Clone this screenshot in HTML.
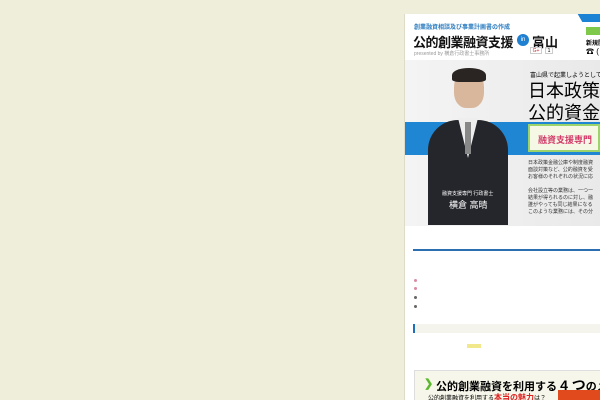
<!DOCTYPE html>
<html><head><meta charset="utf-8"><style>
*{margin:0;padding:0;box-sizing:border-box}
html,body{width:600px;height:400px;overflow:hidden}
body{background:#efeedb;position:relative;font-family:"Liberation Sans","Noto Sans CJK JP",sans-serif}
.abs{position:absolute}
#wrap{position:absolute;left:0;top:0;width:600px;height:400px;overflow:hidden}
</style></head><body><div id="wrap">
<div class="abs" style="left:404px;top:14px;width:196px;height:386px;background:#fff;border-left:1px solid #dedcc6"></div>
<div class="abs" style="left:414px;top:22px;font-size:6px;color:#2a7bbf;font-weight:bold">創業融資相談及び事業計画書の作成</div>
<div class="abs" style="left:413px;top:32px;font-size:13px;color:#111;font-weight:bold;letter-spacing:-0.5px;white-space:nowrap">公的創業融資支援</div>
<div class="abs" style="left:517px;top:34px;width:12px;height:12px;border-radius:50%;background:#1f7fd0;color:#fff;font-size:6px;text-align:center;line-height:12px">in</div>
<div class="abs" style="left:532px;top:32px;font-size:13px;color:#111;font-weight:bold">富山</div>
<div class="abs" style="left:414px;top:50px;font-size:5px;color:#999;white-space:nowrap">presented by 横倉行政書士事務所</div>
<div class="abs" style="left:530px;top:47px;width:12px;height:7px;border:1px solid #ccc;font-size:5px;color:#c33;text-align:center">G+</div>
<div class="abs" style="left:545px;top:47px;width:8px;height:7px;border:1px solid #ccc;font-size:5px;text-align:center">1</div>
<div class="abs" style="left:580px;top:14px;width:30px;height:8px;background:#1c82d4;transform:skewX(30deg)"></div>
<div class="abs" style="left:586px;top:27px;width:20px;height:8px;background:#7ec84a"></div>
<div class="abs" style="left:586px;top:38px;font-size:6px;font-weight:bold;white-space:nowrap">新規開</div>
<div class="abs" style="left:586px;top:46px;font-size:8px;white-space:nowrap">☎ (</div>
<div class="abs" style="left:405px;top:60px;width:195px;height:166px;background:linear-gradient(90deg,#f4f4f4,#e9e9e9)"></div>
<div class="abs" style="left:405px;top:122px;width:195px;height:33px;background:#1e86d2"></div>
<div class="abs" style="left:528px;top:124px;width:72px;height:28px;background:#f4f8e4;border:2px solid #9cd36a"></div>
<div class="abs" style="left:538px;top:133px;font-size:9px;color:#d23a6a;font-weight:bold;white-space:nowrap">融資支援専門</div>
<div class="abs" style="left:530px;top:70px;font-size:6px;white-space:nowrap">富山県で起業しようとして</div>
<div class="abs" style="left:528px;top:80px;font-size:18px;white-space:nowrap;line-height:22px">日本政策金融<br>公的資金調</div>
<div class="abs" style="left:528px;top:160px;font-size:5px;color:#333;line-height:7px;white-space:nowrap">日本政策金融公庫や制度融資<br>面談対策など、公的融資を受<br>お客様のそれぞれの状況に応<br><br>会社設立等の業務は、一つ一<br>結果が得られるのに対し、融<br>誰がやっても同じ結果になる<br>このような業務には、その分</div>
<div class="abs" style="left:454px;top:70px;width:30px;height:38px;border-radius:45% 45% 40% 40%;background:#d9b79c"></div>
<div class="abs" style="left:452px;top:68px;width:34px;height:14px;border-radius:50% 50% 20% 20%;background:#2a2522"></div>
<div class="abs" style="left:428px;top:120px;width:80px;height:105px;border-radius:30px 30px 0 0;background:#25262b"></div>
<div class="abs" style="left:458px;top:118px;width:20px;height:40px;background:#eee;clip-path:polygon(0 0,100% 0,50% 100%)"></div>
<div class="abs" style="left:465px;top:122px;width:6px;height:32px;background:#888"></div>
<div class="abs" style="left:442px;top:190px;font-size:5px;color:#fff;white-space:nowrap">融資支援専門 行政書士</div>
<div class="abs" style="left:449px;top:198px;font-size:9px;color:#fff;white-space:nowrap">横倉 高晴</div>
<div class="abs" style="left:413px;top:249px;width:187px;height:2px;background:#2b6fb0"></div>
<div class="abs" style="left:414px;top:279px;width:3px;height:3px;border-radius:50%;background:#d98ca2"></div>
<div class="abs" style="left:414px;top:287px;width:3px;height:3px;border-radius:50%;background:#d98ca2"></div>
<div class="abs" style="left:414px;top:296px;width:3px;height:3px;border-radius:50%;background:#666"></div>
<div class="abs" style="left:414px;top:305px;width:3px;height:3px;border-radius:50%;background:#666"></div>
<div class="abs" style="left:413px;top:324px;width:187px;height:9px;background:#f4f4ec"></div>
<div class="abs" style="left:413px;top:324px;width:2px;height:9px;background:#1e6fb8"></div>
<div class="abs" style="left:467px;top:344px;width:14px;height:4px;background:#f0e88a"></div>
<div class="abs" style="left:414px;top:370px;width:186px;height:30px;background:#f6f6ea;border:1px solid #ddd;border-right:none;border-bottom:none"></div>
<div class="abs" style="left:424px;top:377px;color:#5ab82e;font-size:11px;font-weight:bold">❯</div>
<div class="abs" style="left:436px;top:375px;font-size:11px;font-weight:bold;white-space:nowrap">公的創業融資を利用する <span style="font-size:14px">4 つ</span>のメ</div>
<div class="abs" style="left:428px;top:392px;font-size:6px;white-space:nowrap">公的創業融資を利用する<span style="color:#d22;font-weight:bold;font-size:8px">本当の魅力</span>は？</div>
<div class="abs" style="left:558px;top:390px;width:42px;height:10px;background:#e04a1c"></div>
</div></body></html>
